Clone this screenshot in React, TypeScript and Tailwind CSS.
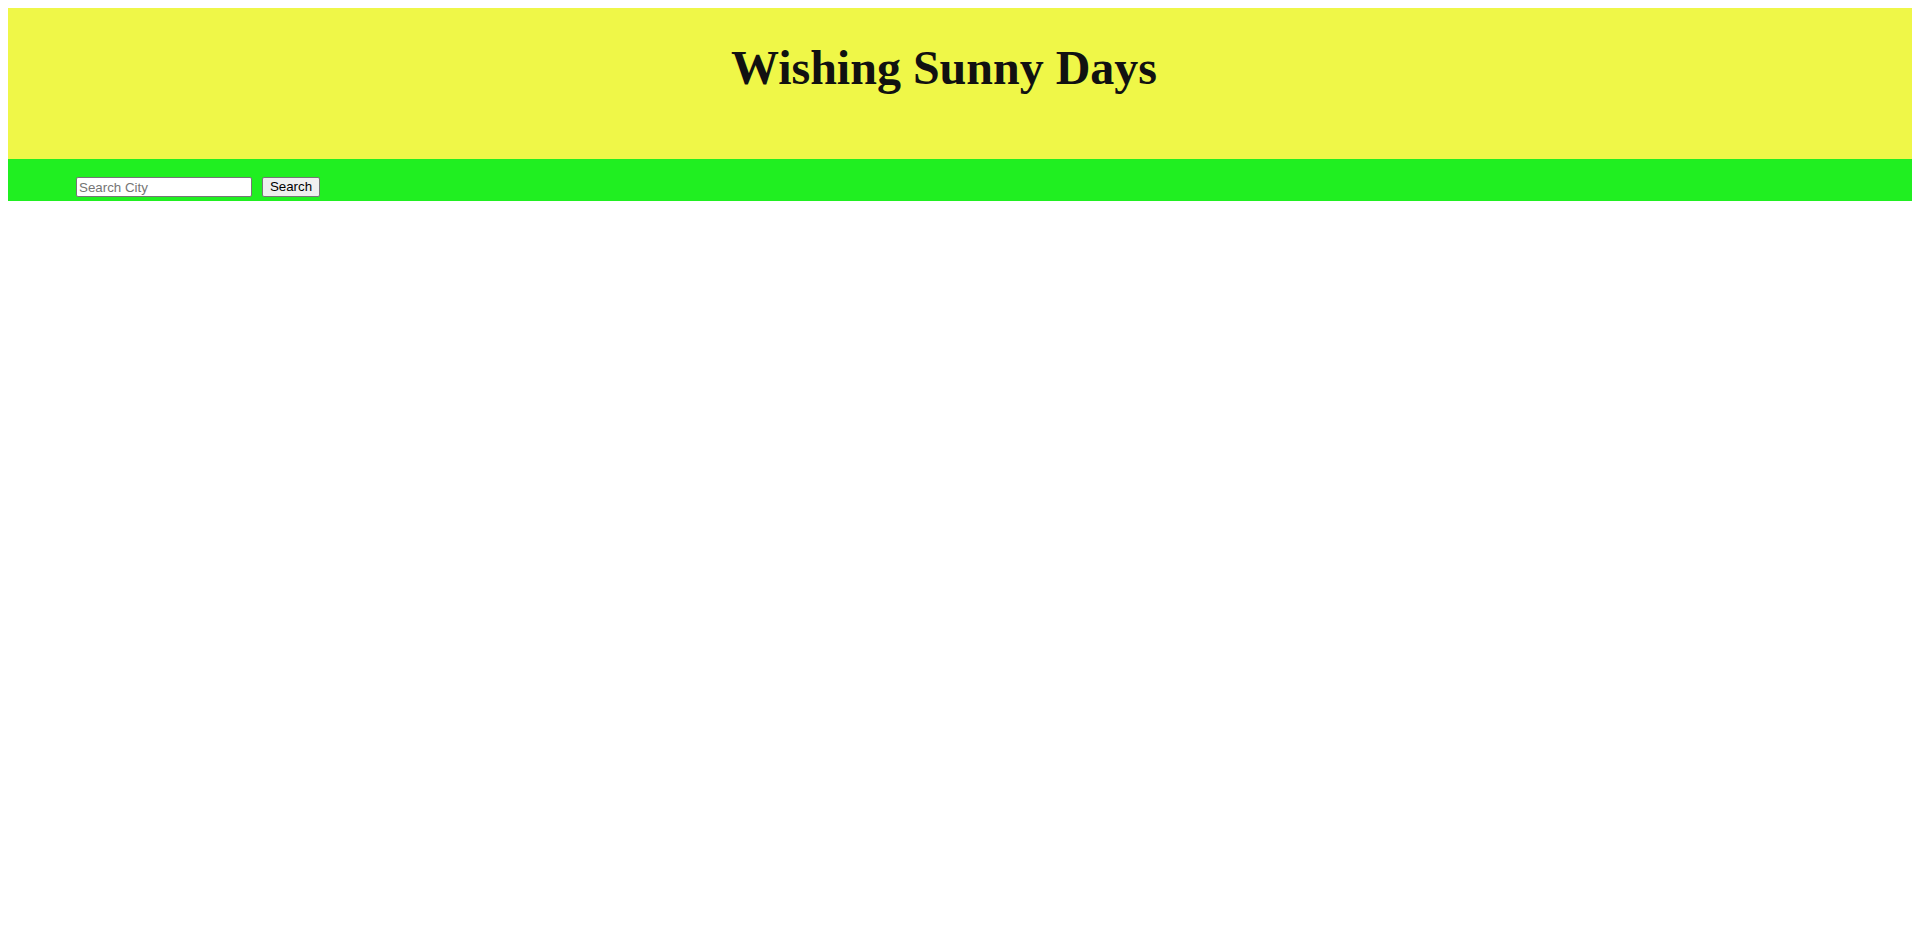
export default function App() {
  return (
    <div className="min-h-[945px] bg-white p-2" style={{ fontFamily: '"Liberation Serif", serif' }}>
      <header className="h-[151px] bg-[#eff748] flex justify-center pr-[32px]">
        <h1 className="mt-[32px] text-[48px] font-bold leading-[1.15] text-[#111111]" style={{ fontFamily: '"Liberation Serif", serif' }}>
          Wishing Sunny Days
        </h1>
      </header>
      <div className="h-[42px] bg-[#20ef21] flex items-start pt-[18px] pl-[68px]" style={{ fontFamily: '"Liberation Sans", Arial, sans-serif' }}>
        <input
          type="text"
          placeholder="Search City"
          className="w-[176px] h-[20px] bg-white border border-[#767676] rounded-[2px] px-[2px] pt-[1px] text-[13.33px] text-black placeholder:text-[#757575] outline-none"
        />
        <button className="ml-[10px] w-[58px] h-[20px] bg-[#efefef] border border-[#767676] rounded-[2px] text-[13.33px] text-black leading-none">
          Search
        </button>
      </div>
    </div>
  );
}
